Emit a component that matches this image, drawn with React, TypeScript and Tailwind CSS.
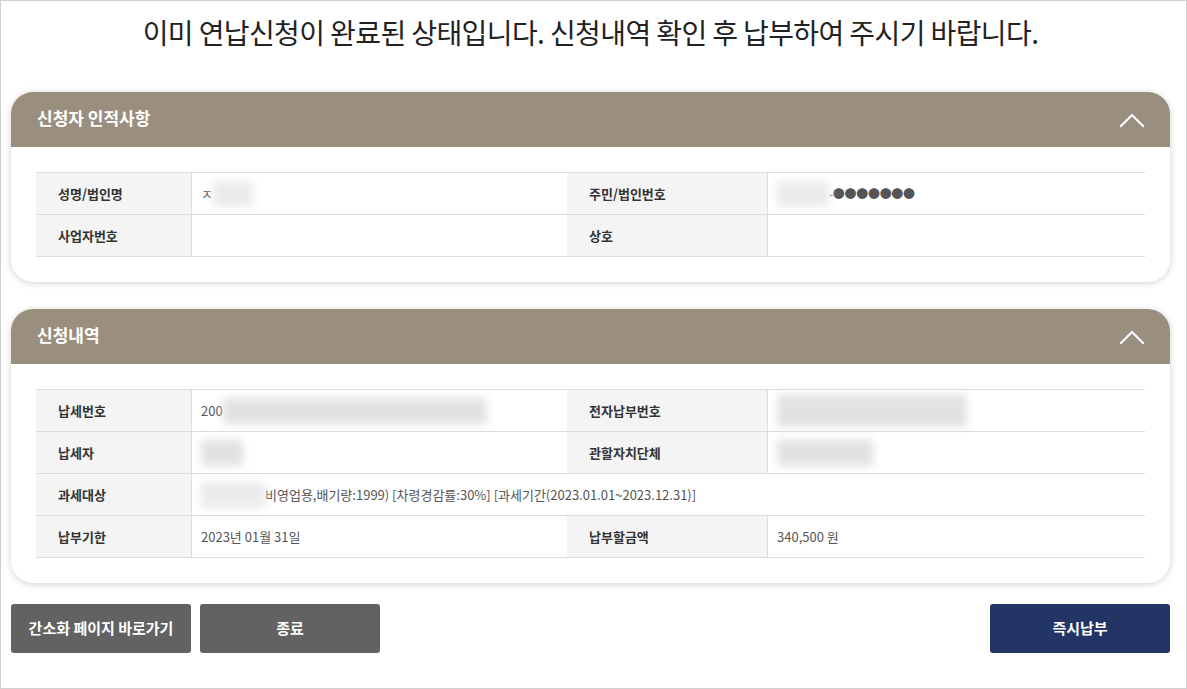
import React from "react";

const font = { fontFamily: '"Noto Sans CJK KR", "Noto Sans", sans-serif' };

function Blur({ w, h = 22, dark = false }: { w: number; h?: number; dark?: boolean }) {
  return (
    <span
      className={`inline-block align-middle blur-[4px] ${dark ? "bg-[#e2e2e2]" : "bg-[#ebebeb]"}`}
      style={{ width: w, height: h }}
    />
  );
}

function Chevron() {
  return (
    <svg width="26" height="16" viewBox="0 0 26 16" fill="none">
      <path d="M2 14 L13 3 L24 14" stroke="white" strokeWidth="2.2" strokeLinecap="square" />
    </svg>
  );
}

function Header({ title }: { title: string }) {
  return (
    <div className="flex h-[55px] items-center justify-between rounded-t-[22px] bg-[#9a8f7e] pl-[26px] pr-[25px]">
      <span className="pb-[3px] text-[17px] font-bold text-white">{title}</span>
      <Chevron />
    </div>
  );
}

function Label({ children }: { children: React.ReactNode }) {
  return (
    <div className="flex items-center border-b border-[#dcdcdc] bg-[#f4f4f4] pl-[22px] text-[13px] font-bold text-[#333]">
      {children}
    </div>
  );
}

function Value({ children, span = false }: { children?: React.ReactNode; span?: boolean }) {
  return (
    <div
      className={`flex items-center border-b border-l border-[#dcdcdc] pl-[9px] text-[13px] text-[#555] ${
        span ? "col-span-3" : ""
      }`}
    >
      {children}
    </div>
  );
}

export default function App() {
  return (
    <div style={font} className="box-border h-[689px] w-[1187px] border border-[#d0d0d0] bg-white">
      <div className="mr-[16px] flex h-[62px] items-center justify-center pl-[10px] text-[28px] tracking-[-0.6px] text-[#222]">
        이미 연납신청이 완료된 상태입니다. 신청내역 확인 후 납부하여 주시기 바랍니다.
      </div>

      <div className="ml-[10px] mr-[16px] mt-[29px] flex flex-col gap-[27px]">
        <div className="rounded-[22px] bg-white shadow-[0_1px_7px_rgba(0,0,0,0.18)]">
          <Header title="신청자 인적사항" />
          <div className="px-[25px] pb-[25px] pt-[25px]">
            <div className="grid grid-cols-[155px_376px_200px_1fr] grid-rows-[42px_42px] border-t border-[#dcdcdc]">
              <Label>성명/법인명</Label>
              <Value>
                <span className="text-[#555]">ㅈ</span>
                <Blur w={40} h={26} />
              </Value>
              <Label>주민/법인번호</Label>
              <Value>
                <Blur w={52} h={26} />
                <span className="text-[12px] tracking-[-0.3px] text-[#555]">-●●●●●●●</span>
              </Value>
              <Label>사업자번호</Label>
              <Value />
              <Label>상호</Label>
              <Value />
            </div>
          </div>
        </div>

        <div className="rounded-[22px] bg-white shadow-[0_1px_7px_rgba(0,0,0,0.18)]">
          <Header title="신청내역" />
          <div className="px-[25px] pb-[25px] pt-[25px]">
            <div className="grid grid-cols-[155px_376px_200px_1fr] grid-rows-[42px_42px_42px_42px] border-t border-[#dcdcdc]">
              <Label>납세번호</Label>
              <Value>
                200
                <Blur w={264} h={26} dark />
              </Value>
              <Label>전자납부번호</Label>
              <Value>
                <Blur w={190} h={32} dark />
              </Value>
              <Label>납세자</Label>
              <Value>
                <Blur w={42} h={26} dark />
              </Value>
              <Label>관할자치단체</Label>
              <Value>
                <Blur w={96} h={26} dark />
              </Value>
              <Label>과세대상</Label>
              <Value span>
                <Blur w={64} h={26} />
                <span>비영업용,배기량:1999) [차령경감률:30%] [과세기간(2023.01.01~2023.12.31)]</span>
              </Value>
              <Label>납부기한</Label>
              <Value>2023년 01월 31일</Value>
              <Label>납부할금액</Label>
              <Value>340,500 원</Value>
            </div>
          </div>
        </div>
      </div>

      <div className="ml-[10px] mr-[16px] mt-[21px] flex items-center">
        <button className="h-[49px] w-[180px] rounded-[3px] bg-[#626262] text-[15px] font-bold text-white">
          간소화 페이지 바로가기
        </button>
        <button className="ml-[9px] h-[49px] w-[180px] rounded-[3px] bg-[#626262] text-[15px] font-bold text-white">
          종료
        </button>
        <div className="flex-1" />
        <button className="h-[49px] w-[180px] rounded-[3px] bg-[#233565] text-[15px] font-bold text-white">
          즉시납부
        </button>
      </div>
    </div>
  );
}
